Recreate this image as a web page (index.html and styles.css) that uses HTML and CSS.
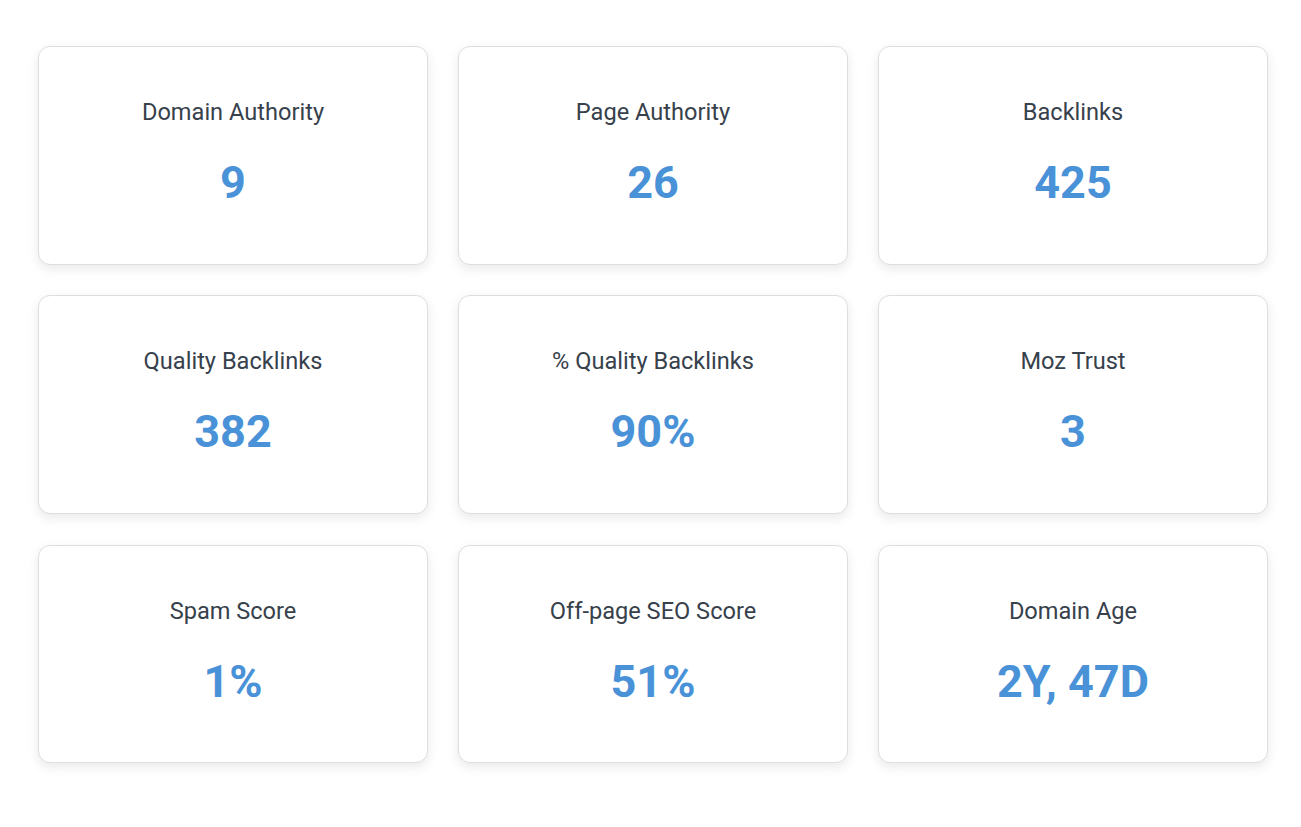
FILE: index.html
```html
<!DOCTYPE html>
<html lang="en">
<head>
<meta charset="utf-8">
<title>SEO Stats</title>
<link rel="stylesheet" href="styles.css">
</head>
<body>
<main class="grid">
  <div class="card"><div class="label">Domain Authority</div><div class="value">9</div></div>
  <div class="card"><div class="label">Page Authority</div><div class="value">26</div></div>
  <div class="card"><div class="label">Backlinks</div><div class="value">425</div></div>
  <div class="card"><div class="label">Quality Backlinks</div><div class="value">382</div></div>
  <div class="card"><div class="label">% Quality Backlinks</div><div class="value">90%</div></div>
  <div class="card"><div class="label">Moz Trust</div><div class="value">3</div></div>
  <div class="card"><div class="label">Spam Score</div><div class="value">1%</div></div>
  <div class="card"><div class="label">Off-page SEO Score</div><div class="value">51%</div></div>
  <div class="card"><div class="label">Domain Age</div><div class="value">2Y, 47D</div></div>
</main>
</body>
</html>
```

FILE: styles.css
```css
html, body {
  margin: 0;
  padding: 0;
  background: #ffffff;
}
body {
  font-family: Roboto, "Liberation Sans", Arial, sans-serif;
  min-height: 827px;
}
.grid {
  display: grid;
  grid-template-columns: repeat(3, 1fr);
  column-gap: 30px;
  row-gap: 30.75px;
  padding: 46px 33px 60px 38px;
}
.card {
  box-sizing: border-box;
  height: 218.5px;
  background: #fff;
  border: 1px solid #dedede;
  border-radius: 12px;
  box-shadow: 0 4px 12px rgba(0, 0, 0, 0.09);
  display: flex;
  flex-direction: column;
  align-items: center;
  justify-content: flex-start;
  padding-top: 51px;
}
.label {
  font-size: 23.6px;
  line-height: 28px;
  color: #37414c;
}
.value {
  margin-top: 30px;
  font-size: 45px;
  line-height: 54px;
  font-weight: 700;
  color: #4a92d8;
}
```
